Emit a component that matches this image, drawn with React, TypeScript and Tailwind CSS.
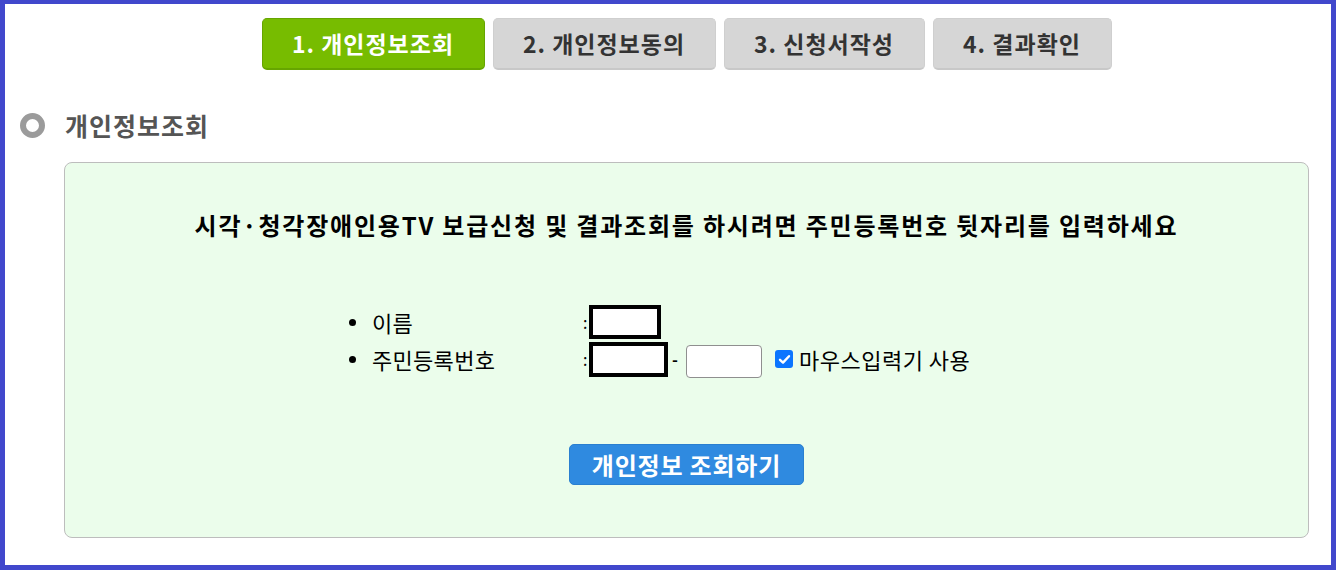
import React from "react";

const KR = { fontFamily: '"Noto Sans CJK KR", "Noto Sans", sans-serif' };

export default function App() {
  const steps = [
    { label: "1. 개인정보조회", w: "w-[223px]", active: true },
    { label: "2. 개인정보동의", w: "w-[223px]", active: false },
    { label: "3. 신청서작성", w: "w-[201px]", active: false },
    { label: "4. 결과확인", w: "w-[179px]", active: false },
  ];
  return (
    <div
      className="w-[1336px] h-[570px] box-border border-[5px] border-t-[4px] border-[#4148cc] bg-white overflow-hidden"
      style={KR}
    >
      <div className="flex justify-center gap-[8px] pt-[14px] pl-[59px] pr-[22px]">
        {steps.map((s) => (
          <div
            key={s.label}
            className={
              s.active
                ? `${s.w} h-[52px] rounded-[5px] bg-[#77bc00] border border-[#66a500] border-b-[2px] flex items-center justify-center text-white text-[23px] tracking-[1px] font-bold`
                : `${s.w} h-[52px] rounded-[5px] bg-[#d6d6d6] border border-[#cfcfcf] border-b-[2px] border-b-[#c8c8c8] flex items-center justify-center text-[#333333] text-[23px] tracking-[1px] font-bold`
            }
          >
            {s.label}
          </div>
        ))}
      </div>

      <div className="flex items-center mt-[41px] pl-[15px] h-[28px]">
        <div className="w-[25px] h-[25px] rounded-full border-[6px] border-[#9b9b9b]" />
        <div className="ml-[20px] text-[25px] tracking-[1px] font-bold text-[#555555] leading-none">개인정보조회</div>
      </div>

      <div className="ml-[59px] mr-[22px] mt-[23px] h-[376px] rounded-[8px] border border-[#bdbdbd] bg-[#ebfdeb] flex flex-col">
        <div className="mt-[47px] text-center text-[24px] font-bold text-black leading-[30px] tracking-[1.8px] whitespace-nowrap">
          시각·청각장애인용TV 보급신청 및 결과조회를 하시려면 주민등록번호 뒷자리를 입력하세요
        </div>

        <ul className="mt-[64px] pl-[284px] text-[22px] tracking-[0.3px] text-black">
          <li className="flex items-center h-[36px]">
            <span className="w-[7px] h-[7px] rounded-full bg-black" />
            <span className="ml-[16px] w-[211px]">이름</span>
            <span className="w-[6px] text-[16px]">:</span>
            <span className="w-[72px] h-[34px] border-[4px] border-black bg-white" />
          </li>
          <li className="flex items-center h-[38px]">
            <span className="w-[7px] h-[7px] rounded-full bg-black" />
            <span className="ml-[16px] w-[211px]">주민등록번호</span>
            <span className="w-[6px] text-[16px]">:</span>
            <span className="w-[79px] h-[35px] border-[4px] border-black bg-white" />
            <span className="ml-[4px] w-[14px] text-[16px] font-bold">-</span>
            <span className="w-[76px] h-[33px] mt-[4px] rounded-[4px] border border-[#8f8f8f] bg-white" />
            <span className="ml-[13px] w-[18px] h-[18px] rounded-[3px] bg-[#0b75ff] flex items-center justify-center">
              <svg width="13" height="13" viewBox="0 0 13 13">
                <path d="M2 6.8 L5 9.6 L11 3.2" stroke="white" strokeWidth="2.4" fill="none" strokeLinecap="round" strokeLinejoin="round" />
              </svg>
            </span>
            <span className="ml-[6px] text-[22px] tracking-[0.5px]">마우스입력기 사용</span>
          </li>
        </ul>

        <div className="mt-[66px] flex justify-center">
          <div className="w-[235px] h-[41px] rounded-[5px] bg-[#2f8ae0] border border-[#2a7fd0] flex items-center justify-center text-white text-[24px] tracking-[0.8px] font-bold">
            개인정보 조회하기
          </div>
        </div>
      </div>
    </div>
  );
}
